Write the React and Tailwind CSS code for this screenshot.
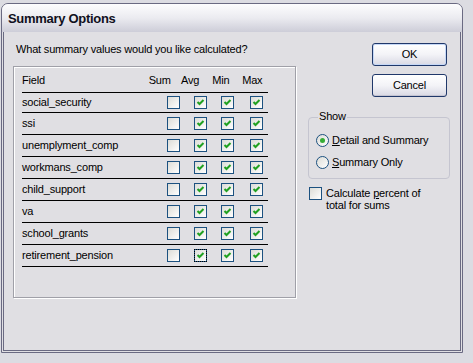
import React from "react";

const fields = [
  "social_security",
  "ssi",
  "unemplyment_comp",
  "workmans_comp",
  "child_support",
  "va",
  "school_grants",
  "retirement_pension",
];

function Check({ checked, focus }) {
  return (
    <span
      className={
        "flex h-[13px] w-[13px] shrink-0 items-center justify-center border border-[#1c5180] bg-linear-to-br from-[#dcdcd7] to-white " +
        (focus ? "outline-1 outline-dotted outline-black -outline-offset-1" : "")
      }
    >
      {checked && (
        <svg width="9" height="9" viewBox="0 0 9 9">
          <path d="M1.5 4 L3.5 6 L7.5 2" fill="none" stroke="#21a121" strokeWidth="2" />
        </svg>
      )}
    </span>
  );
}

function Radio({ checked }) {
  return (
    <span className="flex h-[13px] w-[13px] shrink-0 items-center justify-center rounded-full border border-[#1c5180] bg-linear-to-br from-[#dcdcd7] to-white">
      {checked && <span className="h-[5px] w-[5px] rounded-full bg-[#36ad36]" />}
    </span>
  );
}

function Button({ children, primary }) {
  return (
    <button
      className={
        "ml-[64px] flex h-[23px] w-[75px] items-center justify-center rounded-[3px] border border-[#20386a] bg-linear-to-b from-white via-[#f3f3f7] to-[#d9d9e4] text-[11px] text-black " +
        (primary ? "shadow-[inset_0_0_0_1px_#c6d8f6]" : "shadow-[inset_0_-1px_0_#c4c4d2]")
      }
    >
      {children}
    </button>
  );
}

export default function App() {
  return (
    <div className="h-[363px] w-[473px] overflow-hidden bg-[#dcdce2] pl-[1px] pt-[3px] font-['Liberation_Sans',Arial,sans-serif] text-[11px] leading-[13px] tracking-[-0.18px] text-black">
      <div className="flex h-[350px] w-[462px] flex-col rounded-t-[7px] border border-[#6a6a82] bg-[#e0dfe3]">
        <div className="flex h-[28px] items-center rounded-t-[6px] bg-linear-to-b from-[#fdfdfe] via-[#ebebf0] to-[#cdcdd8] pl-[6px] text-[13px] font-bold tracking-[-0.3px] text-[#101020]">
          Summary Options
        </div>

        <div className="flex flex-1 px-[1px] pb-[1px]">
          <div className="flex flex-1 border-x border-b border-[#6a6a82]">
            {/* left column */}
            <div className="w-[293px] pl-[9px]">
              <div className="ml-[3px] mt-[11px]">What summary values would you like calculated?</div>

              <div className="mt-[10px] h-[232px] w-[283px] border border-[#a0a0a8] pl-[8px] shadow-[inset_1px_1px_0_#fff,1px_1px_0_#fff]">
                <div className="w-[246px]">
                  <div className="flex h-[26px] border-b border-black pt-[7px]">
                    <span className="w-[125px]">Field</span>
                    <span className="w-[31px] text-center">Sum</span>
                    <span className="w-[31px] text-center">Avg</span>
                    <span className="w-[32px] text-center">Min</span>
                    <span className="w-[32px] text-center">Max</span>
                  </div>

                  {fields.map((f, i) => (
                    <div
                      key={f}
                      className={
                        "flex items-center border-b border-black " + (i === 0 ? "h-[20px]" : "h-[22px]")
                      }
                    >
                      <span className="w-[145px]">{f}</span>
                      <Check />
                      <span className="ml-[14px]">
                        <Check checked focus={i === fields.length - 1} />
                      </span>
                      <span className="ml-[14px]">
                        <Check checked />
                      </span>
                      <span className="ml-[16px]">
                        <Check checked />
                      </span>
                    </div>
                  ))}
                </div>
              </div>
            </div>

            {/* right column */}
            <div className="ml-[11px] flex w-[142px] flex-col">
              <div className="mt-[11px]">
                <Button primary>OK</Button>
              </div>
              <div className="mt-[8px]">
                <Button>Cancel</Button>
              </div>

              <div className="mt-[20px] flex flex-col rounded-[4px] border border-[#c5c5d0] pb-[9px] pl-[7px]">
                <span className="-mt-[8px] ml-[2px] w-fit bg-[#e0dfe3] px-[1px]">Show</span>
                <div className="mt-[11px] flex h-[13px] items-center gap-[3px]">
                  <Radio checked />
                  <span>
                    <span className="underline underline-offset-[1px]">D</span>etail and Summary
                  </span>
                </div>
                <div className="mt-[9px] flex h-[13px] items-center gap-[3px]">
                  <Radio />
                  <span>
                    <span className="underline underline-offset-[1px]">S</span>ummary Only
                  </span>
                </div>
              </div>

              <div className="ml-[1px] mt-[8px] flex items-start gap-[4px]">
                <Check />
                <span className="leading-[12px]">
                  Calculate <span className="underline underline-offset-[1px]">p</span>ercent of
                  <br />
                  total for sums
                </span>
              </div>
            </div>
          </div>
        </div>
      </div>
    </div>
  );
}
